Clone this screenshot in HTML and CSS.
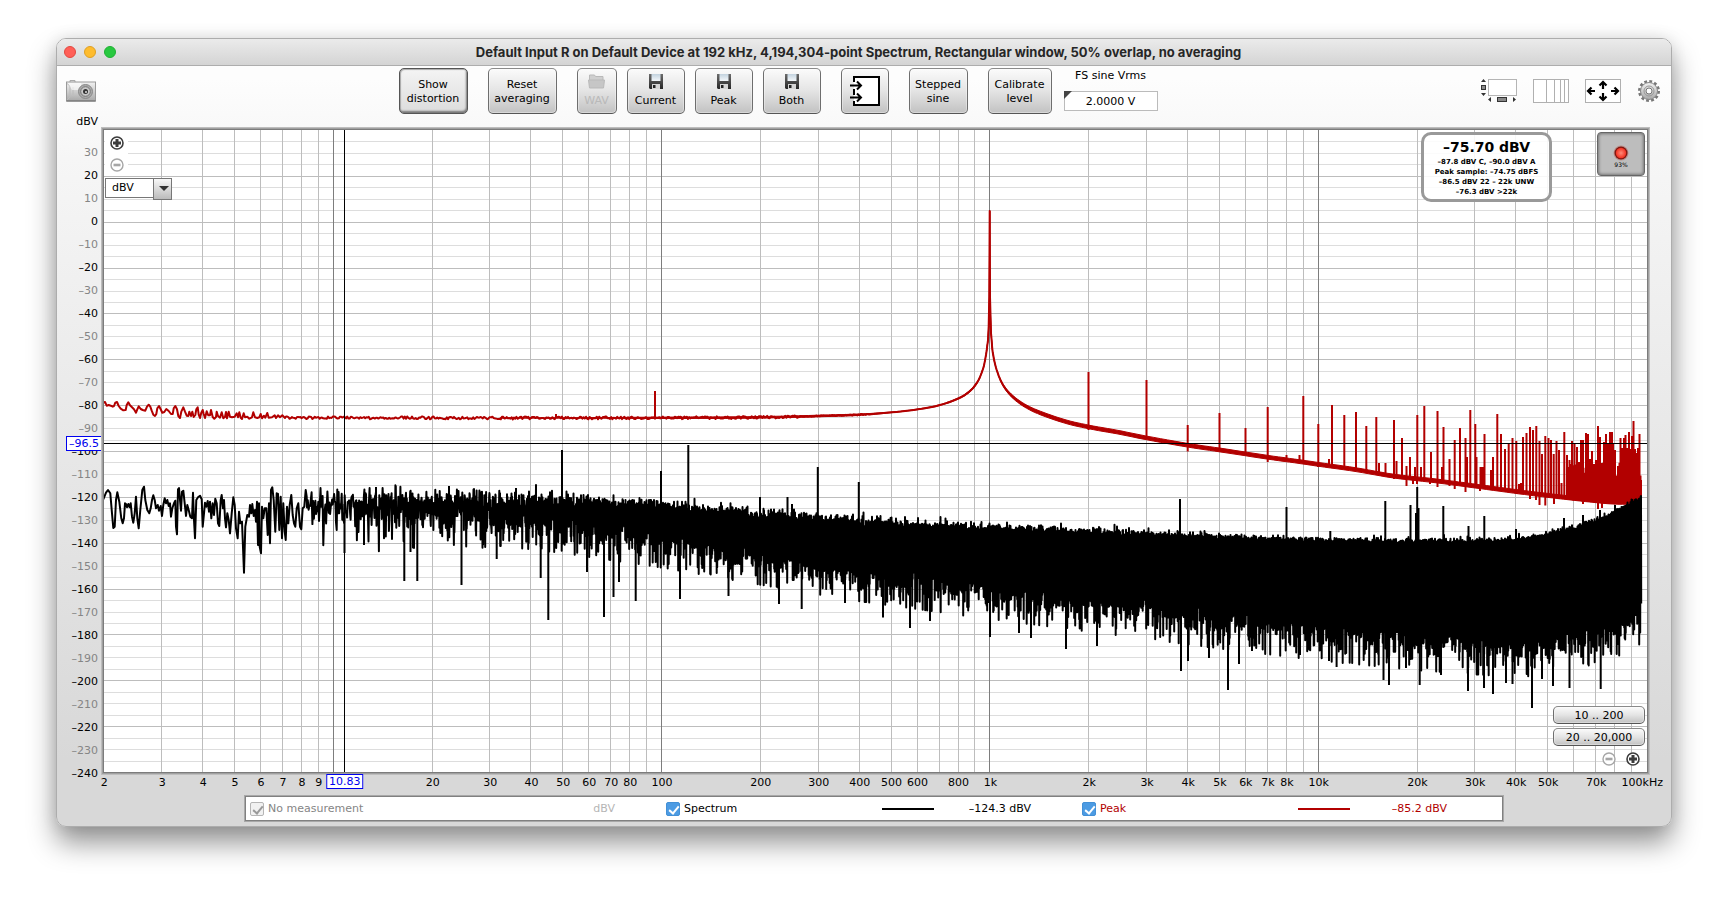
FILE: index.html
```html
<!DOCTYPE html>
<html lang="en">
<head>
<meta charset="utf-8">
<title>Spectrum</title>
<link rel="stylesheet" href="styles.css">
</head>
<body>
<svg class="defs" aria-hidden="true">
  <linearGradient id="metal" x1="0" y1="0" x2="0" y2="1"><stop offset="0" stop-color="#f2f2f2"/><stop offset="1" stop-color="#a8a8a8"/></linearGradient>
  <linearGradient id="paper" x1="0" y1="0" x2="0" y2="1"><stop offset="0" stop-color="#c3d3df"/><stop offset="1" stop-color="#f4f8fb"/></linearGradient>
  <linearGradient id="disk" x1="0" y1="0" x2="0" y2="1"><stop offset="0" stop-color="#6c6c6c"/><stop offset="1" stop-color="#262626"/></linearGradient>
  <radialGradient id="led"><stop offset="0" stop-color="#ff8a78"/><stop offset="1" stop-color="#f2301f"/></radialGradient>
  <symbol id="floppy" viewBox="0 0 14 15">
    <path d="M0 0h14v15h-13l-1-1z" fill="url(#disk)"/><path d="M2.5 0h9v7h-9z" fill="url(#paper)"/>
    <path d="M3 10h8v5h-8z" fill="#d5d5d5"/><path d="M4 11h2.5v3h-2.5z" fill="#222"/>
  </symbol>
  <symbol id="zoom-in" viewBox="0 0 14 14">
    <circle cx="7" cy="7" r="6" fill="#fff" stroke="#3c3c3c" stroke-width="1.6"/><path d="M7 3v8M3 7h8" stroke="#3c3c3c" stroke-width="3"/>
  </symbol>
  <symbol id="zoom-out" viewBox="0 0 14 14">
    <circle cx="7" cy="7" r="6" fill="#fff" stroke="#a6a6a6" stroke-width="1.4"/><path d="M3.5 7h7" stroke="#a6a6a6" stroke-width="2.6"/>
  </symbol>
</svg>

<main class="window">
  <header class="titlebar">
    <div class="lights"><i class="light red"></i><i class="light amber"></i><i class="light green"></i></div>
    <h1>Default Input R on Default Device at 192 kHz, 4,194,304-point Spectrum, Rectangular window, 50% overlap, no averaging</h1>
  </header>

  <div class="toolbar">
    <button class="plain" aria-label="Capture image">
      <svg width="30" height="22" viewBox="0 0 30 22">
        <path d="M4 2V.5h5V2" fill="#eee" stroke="#aaa"/>
        <rect x=".5" y="2" width="29" height="19" fill="url(#metal)" stroke="#9a9a9a"/>
        <path d="M1 3.5 4 6v11l-3 3M7 7v8" fill="none" stroke="#bbb"/><path d="M2 3h13v7H6z" fill="#fff" opacity=".6"/>
        <path d="M.5 21h29" stroke="#666"/>
        <circle cx="19.500" cy="11.500" r="7" fill="#aaa" stroke="#888"/><circle cx="19.500" cy="11.500" r="4.800" fill="#c9c9c9" stroke="#777"/>
        <circle cx="19.500" cy="11.500" r="2.500" fill="#333"/><circle cx="20" cy="12" r="1" fill="#ddd"/>
      </svg>
    </button>
    <div class="actions">
      <button class="btn w-wide toggled">Show<br>distortion</button>
      <button class="btn w-wide">Reset<br>averaging</button>
      <div class="group">
        <button class="btn w-small icon-top" disabled>
          <svg width="17" height="15" viewBox="0 0 17 15"><path d="M1.500 6V1h5l1 1.500h7.500V6" fill="#cfcfcf" stroke="#b9b9b9"/><path d="M.5 6h16l-1 8h-14z" fill="#c6c6c6" stroke="#b9b9b9"/></svg>
          WAV</button>
        <button class="btn w-mid icon-top"><svg width="14" height="15"><use href="#floppy"/></svg>Current</button>
        <button class="btn w-mid icon-top"><svg width="14" height="15"><use href="#floppy"/></svg>Peak</button>
        <button class="btn w-mid icon-top"><svg width="14" height="15"><use href="#floppy"/></svg>Both</button>
      </div>
      <button class="btn w-input" aria-label="Input">
        <svg width="30" height="30" viewBox="0 0 30 30">
          <path d="M4 1h25v28H4z" fill="#fff"/><path d="M4 6V1h25v28H4v-4M4 13v6" fill="none" stroke="#000" stroke-width="2"/>
          <path d="M0 9.500h10M7 5.500l4 4-4 4M0 21.500h10M7 17.500l4 4-4 4" fill="none" stroke="#000" stroke-width="2"/>
        </svg>
      </button>
      <button class="btn w-step">Stepped<br>sine</button>
      <button class="btn w-cal">Calibrate<br>level</button>
      <label class="field">FS sine Vrms<span class="field-box"><input type="text" value="2.0000 V"></span></label>
    </div>
    <div class="views">
      <button class="plain" aria-label="Scrollbars">
        <svg width="36" height="24" viewBox="0 0 36 24"><rect x="7.500" y=".5" width="28" height="16" fill="#fff" stroke="#b5b5b5"/>
          <path d="M0 3l2.500-3L5 3zM0 14l2.500 3L5 14zM10 18v5l-3-2.500zM32 18v5l3-2.500z" fill="#333"/>
          <rect x=".5" y="6.500" width="4" height="4" fill="#888" stroke="#333"/><rect x="16.500" y="18.500" width="9" height="4" fill="#888" stroke="#333"/></svg>
      </button>
      <button class="plain" aria-label="Frequency axis">
        <svg width="36" height="24" viewBox="0 0 36 24"><rect x=".5" y=".5" width="35" height="23" fill="#fff" stroke="#b0b0b0"/><path d="M13.500 1v22M21.500 1v22M27.500 1v22M31.500 1v22" stroke="#b0b0b0"/></svg>
      </button>
      <button class="plain" aria-label="Graph limits">
        <svg width="36" height="24" viewBox="0 0 36 24"><rect x=".5" y=".5" width="35" height="23" fill="#fff" stroke="#b0b0b0"/>
          <path d="M18 10V3M14.500 6.500 18 3l3.500 3.500M18 14v7M14.500 17.500 18 21l3.500-3.500M10 12H3M6.500 8.500 3 12l3.500 3.500M26 12h7M29.500 8.500 33 12l-3.500 3.500" fill="none" stroke="#000" stroke-width="2.200"/></svg>
      </button>
      <button class="plain" aria-label="Settings">
        <svg width="24" height="24" viewBox="0 0 24 24"><circle cx="12" cy="12" r="9.700" fill="none" stroke="#777" stroke-width="2.600" stroke-dasharray="2.800 2.280"/>
          <circle cx="12" cy="12" r="8.500" fill="url(#metal)" stroke="#858585"/><circle cx="12" cy="12" r="5" fill="none" stroke="#999"/><circle cx="12" cy="12" r="3" fill="#fff" stroke="#777"/></svg>
      </button>
    </div>
  </div>

  <div class="unit">dBV</div>

  <section class="chart">
    <div class="y-axis"><div class="y-labels" id="yLabels"></div><output class="readout y-read">–96.5</output></div>
    <div class="plot">
      <svg class="graph" id="graph" viewBox="104 130 1543 642" preserveAspectRatio="none" role="img" aria-label="Spectrum and peak level against frequency"></svg>
      <div class="zoom-y">
        <button class="plain" aria-label="Zoom in level"><svg width="14" height="14"><use href="#zoom-in"/></svg></button>
        <button class="plain" aria-label="Zoom out level"><svg width="14" height="14"><use href="#zoom-out"/></svg></button>
      </div>
      <span class="unit-select"><select aria-label="Level unit"><option>dBV</option></select></span>
      <div class="levels"><strong>–75.70 dBV</strong><span>–87.8 dBV C, –90.0 dBV A</span><span>Peak sample: –74.75 dBFS</span><span>–86.5 dBV 22 – 22k UNW</span><span>–76.3 dBV &gt;22k</span></div>
      <button class="record" aria-label="Record"><svg width="16" height="16" viewBox="0 0 16 16"><circle cx="8" cy="8" r="7.500" fill="#b98e8a"/><circle cx="8" cy="8" r="6.500" fill="#7c1710"/><circle cx="8" cy="8" r="5.200" fill="url(#led)"/></svg>93%</button>
      <div class="ranges">
        <button class="btn">10 .. 200</button>
        <button class="btn">20 .. 20,000</button>
        <div class="zoom-x">
          <button class="plain" aria-label="Zoom out frequency"><svg width="14" height="14"><use href="#zoom-out"/></svg></button>
          <button class="plain" aria-label="Zoom in frequency"><svg width="14" height="14"><use href="#zoom-in"/></svg></button>
        </div>
      </div>
    </div>
    <div class="x-axis" id="xLabels"><output class="readout x-read">10.83</output></div>
  </section>

  <footer class="legend">
    <div class="entry off"><label><input type="checkbox" checked disabled>No measurement</label><span class="value">dBV</span></div>
    <div class="entry"><label><input type="checkbox" checked>Spectrum</label><i class="swatch"></i><span class="value">–124.3 dBV</span></div>
    <div class="entry peak"><label><input type="checkbox" checked>Peak</label><i class="swatch"></i><span class="value">–85.2 dBV</span></div>
  </footer>
</main>
<script src="chart.js"></script>
</body>
</html>
```
FILE: styles.css
```css
* { box-sizing: border-box; }
body {
  margin: 0; padding: 38px 55px 73px 56px; height: 100vh; min-height: 600px; min-width: 1200px;
  background: #fff; color: #000; font: 11px/14px "DejaVu Sans", Verdana, sans-serif; overflow: hidden;
}
button, input, select { font: inherit; color: inherit; }
.defs { position: absolute; width: 0; height: 0; }
.window {
  height: 100%; display: flex; flex-direction: column; border: 1px solid #adadad; border-radius: 10px;
  background: linear-gradient(#fdfdfd 40px, #f6f6f6 120px, #d8d8d8 720px);
  box-shadow: 0 16px 28px rgba(0,0,0,.42), 0 0 16px rgba(0,0,0,.1);
}
.titlebar {
  flex: none; height: 27px; display: flex; align-items: center; padding: 0 70px 0 7px;
  background: linear-gradient(#ebebeb, #d4d4d4); border-bottom: 1px solid #adadad; border-radius: 9px 9px 0 0;
}
.titlebar h1 { flex: 1; margin: 0; text-align: center; font: bold 13px/16px Inter, sans-serif; color: #262626; white-space: nowrap; }
.lights { display: flex; gap: 8px; }
.light { width: 12px; height: 12px; border-radius: 50%; border: 1px solid; }
.red { background: #ff5f57; border-color: #e2483f; }
.amber { background: #febc2e; border-color: #dfa023; }
.green { background: #28c840; border-color: #1fb033; }

.toolbar { flex: none; display: flex; justify-content: space-between; padding: 2px 10px 0 9px; height: 48px; }
.plain { display: flex; padding: 0; border: 0; background: none; align-self: center; }
.toolbar > .plain { margin-top: -1px; }
.actions { display: flex; gap: 20px; margin-right: 21px; }
.group { display: flex; gap: 10px; }
.btn {
  padding: 2px 0 0; border: 1px solid #6e6e6e; border-top-color: #8a8a8a; border-bottom-color: #555; border-radius: 5px;
  background: linear-gradient(#fbfbfb, #e4e4e4 50%, #c2c2c2); box-shadow: inset 0 0 0 1px rgba(255,255,255,.35);
  height: 46px; text-align: center;
}
.toggled { background: linear-gradient(#f4f4f4, #dcdcdc); border-color: #555; box-shadow: inset -1px -2px 2px #777, inset 1px 1px 1px #aaa; }
.btn:disabled { color: #b9b9b9; }
.w-wide { width: 69px; } .w-small { width: 40px; } .w-mid { width: 58px; } .w-input { width: 48px; } .w-step { width: 59px; } .w-cal { width: 64px; }
.w-input { padding: 0; }
.w-input svg { display: block; margin: 0 auto; }
.icon-top { padding: 0; display: flex; flex-direction: column; align-items: center; justify-content: center; gap: 5px; }
.field { display: flex; flex-direction: column; gap: 8px; padding-top: 1px; align-items: center; margin-left: -8px; }
.field-box { position: relative; display: block; }
.field-box::before { content: ""; position: absolute; left: 0; top: 0; border: 4px solid; border-color: #444 transparent transparent #444; }
.field input { display: block; width: 94px; height: 20px; padding: 0; border: 1px solid #bbb; background: #fff; text-align: center; }
.views { display: flex; gap: 16px; align-items: center; }

.unit { flex: none; height: 16px; width: 41px; padding-top: 1px; text-align: right; }
.chart { flex: 1; min-height: 0; display: grid; grid-template: 1fr 25px / 47px 1fr 24px; }
.y-axis { position: relative; min-height: 0; }
.y-labels { position: absolute; inset: 12px 6px -13px 0; display: grid; grid-auto-rows: 1fr; justify-items: end; align-items: center; line-height: 12px; }
.minor { color: #858585; }
.readout { position: absolute; height: 15px; padding: 0 2px; border: 1px solid #00e; background: #fff; color: #00e; line-height: 13px; }
.y-read { right: 2px; top: 47.600%; }
.x-read { left: 15.600%; top: 2px; transform: translateX(-50%); }
.plot { position: relative; min-width: 0; min-height: 0; background: #fff; box-shadow: 0 0 0 1px #7c7c7c, 0 0 0 2px #a0a0a0, 0 0 0 3px #bdbdbd; }
.graph { position: absolute; width: 100%; height: 100%; display: block; }
.graph path { fill: none; }
.graph .g-minor { stroke: #ddd; }
.graph .g-major { stroke: #bdbdbd; }
.graph .g-decade { stroke: #7d7d7d; }
.graph .cursor { stroke: #000; }
.graph .t-peak { stroke: #b20000; stroke-width: 2; stroke-linejoin: round; }
.graph .t-skirt { stroke: #b20000; stroke-width: 1; fill: #b20000; }
.graph .t-spec { stroke: #000; stroke-width: 2; stroke-linejoin: round; }
.zoom-y { position: absolute; left: 1px; top: 6px; display: flex; flex-direction: column; gap: 8px; padding: 0 4px 0 5px; background: #fff; }
.unit-select { position: absolute; left: 1px; top: 48px; width: 67px; height: 20px; background: #fff; }
.unit-select select { appearance: none; width: 100%; height: 100%; padding: 0 20px 0 6px; border: 1px solid #777; border-radius: 0; background: none; }
.unit-select::before { content: ""; position: absolute; right: 0; top: 0; width: 17px; height: 20px; border: 1px solid #777; background: linear-gradient(#f8f8f8, #bbb); }
.unit-select::after { content: ""; position: absolute; right: 3px; top: 8px; border: 5px solid transparent; border-top-color: #333; border-bottom: 0; pointer-events: none; }
.levels {
  position: absolute; right: 95px; top: 2px; width: 131px; height: 70px; padding-top: 2px; display: flex; flex-direction: column; align-items: center;
  border: 3px solid #999; border-radius: 10px; background: rgba(255,255,255,.88); font: bold 7px/10px "DejaVu Sans", sans-serif; white-space: nowrap;
}
.levels strong { font: bold 14px/20px "DejaVu Sans", sans-serif; }
.record {
  position: absolute; right: 2px; top: 2px; width: 48px; height: 44px; padding: 12px 0 0; display: flex; flex-direction: column; align-items: center;
  border: 1px solid #666; border-radius: 4px; background: #bdbdbd; box-shadow: inset 0 0 3px 1px #777; font-size: 6px; line-height: 8px;
}
.ranges { position: absolute; right: 2px; bottom: 6px; width: 92px; display: flex; flex-direction: column; gap: 4px; }
.ranges .btn { height: 18px; padding: 1px 0 0; line-height: 14px; }
.zoom-x { display: flex; justify-content: flex-end; gap: 10px; padding: 2px 5px 0 0; }
.x-axis { grid-column: 2; position: relative; }
.tick { position: absolute; top: 4px; transform: translateX(-50%); white-space: nowrap; }
.tick.last { transform: none; right: -16px; }

.legend { flex: none; height: 23px; margin: 0 169px 6px 189px; padding: 0 4px; display: grid; grid-template-columns: repeat(3, 1fr); background: #fff; box-shadow: 0 0 0 1px #808080, 0 0 0 2px #a8a8a8; }
.entry { display: flex; align-items: center; padding: 1px 51px 0 0; }
.entry label { flex: 1; display: flex; align-items: center; gap: 4px; }
.entry input { appearance: none; position: relative; width: 14px; height: 14px; margin: 0; border-radius: 2px; background: #4c9be3; border: 1px solid #4390d6; }
.entry input::after { content: ""; position: absolute; left: 4px; top: 1px; width: 4px; height: 8px; border: solid #fff; border-width: 0 2px 2px 0; transform: rotate(40deg); }
.entry.off { color: #858585; }
.off input { background: #f1f1f1; border-color: #b5b5b5; }
.off input::after { border-color: #999; }
.off .value { color: #b5b5b5; }
.swatch { width: 52px; height: 2px; margin-right: 33px; background: #000; }
.value { width: 64px; text-align: right; white-space: nowrap; }
.peak { color: #b20000; }
.peak .swatch { background: #b20000; }
```
FILE: chart.js
```js
// Graph space: x 104..1647 covers 2 Hz..100 kHz, y 130..772 covers +40..-240 dBV.
const DECADE = 328.3, X10 = 333.3;
const fx = f => X10 + DECADE * Math.log10(f / 10);
const xf = x => 10 * Math.pow(10, (x - X10) / DECADE);
const vy = v => 130 + (40 - v) * 642 / 280;

let state = 20240;
const rnd = () => { state = (state * 1664525 + 1013904223) >>> 0; return (state + 1) / 4294967298; };
const lerp = (t, x) => {
  let i = 1;
  while (i < t.length - 1 && t[i][0] < x) i++;
  const [a, b] = [t[i - 1], t[i]];
  return a[1] + (b[1] - a[1]) * Math.min(1, Math.max(0, (x - a[0]) / (b[0] - a[0])));
};
// Catmull-Rom resampling of a polyline
const smooth = p => {
  const out = [];
  for (let i = 0; i < p.length - 1; i++) {
    const a = p[Math.max(0, i - 1)], b = p[i], c = p[i + 1], d = p[Math.min(p.length - 1, i + 2)];
    const sb = i ? (c[1] - a[1]) / (c[0] - a[0]) : (c[1] - b[1]) / (c[0] - b[0]);
    const sc = i < p.length - 2 ? (d[1] - b[1]) / (d[0] - b[0]) : (c[1] - b[1]) / (c[0] - b[0]);
    const h = c[0] - b[0];
    for (let k = 0; k < 6; k++) {
      const t = k / 6, u = 1 - t;
      out.push([b[0] + h * t, (1 + 2 * t) * u * u * b[1] + t * u * u * h * sb + t * t * (3 - 2 * t) * c[1] - t * t * u * h * sc]);
    }
  }
  out.push(p[p.length - 1]);
  return out;
};
const toPath = p => 'M' + p.map(q => q[0].toFixed(1) + ' ' + q[1].toFixed(1)).join('L');
const graph = document.getElementById('graph');
const add = (cls, d) => {
  const p = document.createElementNS('http://www.w3.org/2000/svg', 'path');
  p.setAttribute('class', cls); p.setAttribute('d', d); graph.appendChild(p);
};
const pairs = s => s.trim().split(/\s+/).map(p => p.split(',').map(Number));
const traced = s => pairs(s).map(([x, y]) => [40 + x / 3, 380 + y / 3]);

// grid
let minor = '', major = '', decade = '';
for (let v = 35; v > -240; v -= 5) {
  const d = `M104 ${Math.round(vy(v)) + .5}H1647`;
  if (v % 20) minor += d; else major += d;
}
for (let m = 1; m < 1e5; m *= 10) for (let k = 1; k < 10; k++) {
  const f = m * k;
  if (f <= 2) continue;
  const d = `M${Math.floor(fx(f)) + .5} 130V772`;
  if (k === 1) decade += d; else major += d;
}
add('g-minor', minor); add('g-major', major); add('g-decade', decade);

// peak trace
const left = pairs(`285,417.7 500,418 700,417.700 760,417.300 818,416 859,414.700 892,412.300 918,409.300 939,405.300 958.700,398.300 970,391 978,381
 983.300,368 986,355 988,340`);
const right = pairs(`991,333 992.700,352 996.700,370 1003,385 1013,397 1026.700,406.700
 1043,414 1067,422 1089,427 1117,432 1147,438 1188,445.300 1220,450 1268,457.300 1300,461.700 1318,464.300 1356,469.700 1393,476 1437,481
 1480,486.700 1520,492 1547,495.300 1580,499 1613,502 1641.500,502`);
const skirt = [...smooth(left), [988.7, 326], [989.3, 297], [989.7, 211], [990, 297], ...smooth(right)];
const peak = traced(`190,68 195,66 200,77 206,75 212,77 218,80 222,78 226,68 231,66 236,78 242,86 250,91 257,90 260,75 265,67 270,76 276,82
 282,88 288,98 292,88 296,79 302,87 308,90 316,92 321,80 326,74 331,80 335,92 340,104 345,108 349,102 352,85 357,78 362,88 367,98 373,96
 379,87 386,93 393,102 398,102 401,85 406,78 411,88 415,108 420,114 424,95 430,82 435,95 440,107 445,108 448,95 453,108 457,95 461,111
 466,105 469,88 473,82 476,104 480,114 484,98 488,90 491,102 495,114 500,94 505,106 510,106 513,90 518,111 523,116 528,111 530,95 534,108
 540,113 545,97 550,115 555,111 558,96 561,115 566,95 570,110 576,112 584,110 590,100 594,112 598,97 602,113 606,117 611,100 615,112
 622,110 628,116 636,112 640,97 645,112 652,114 658,112 662,102 666,115 672,107 676,113 682,99 686,113 696,112 704,106 708,114 714,106
 720,112 727,106 735,114`);
for (let x = 286; x < 870; x += 1.2) peak.push([x, lerp(skirt, x) + (rnd() - .5) * (x < 800 ? 2.8 : 1.2)]);
peak.push(...skirt.filter(p => p[0] > 870));
add('t-peak', toPath(peak));

const half = [[560, 0], [650, .7], [850, .8], [905, .2], [940, .4], [975, .9], [988, .2], [993, .3], [1010, 1.4], [1040, 1.8], [1641, 2]];
const body = skirt.filter(p => p[0] >= 500);
add('t-skirt', toPath([...body.map(p => [p[0], p[1] - lerp(half, p[0])]), ...body.slice().reverse().map(p => [p[0], p[1] + lerp(half, p[0])])]) + 'Z');

const peakUp = pairs(`556,414 655,391 1088.500,372 1146.500,380 1187.700,425 1219.500,413 1245.500,428 1267.700,407 1286.500,455 1299.500,455 1303.300,396
 1318.300,424 1329,459 1332,405 1344.300,415 1356,412 1366.300,426 1376.300,417 1379,463 1385.500,463 1394,420 1396.500,461 1402,438 1406.500,466
 1410,457 1415,467 1417.300,415 1421,467 1424.300,406 1431,452 1437.500,411 1442,467 1443.500,427 1449.500,459 1454.700,440 1460,428 1465.500,438
 1467,457 1470.300,410 1475.300,424 1476.500,457 1480.500,467 1482.500,467 1484.500,434 1491,470 1493,457 1497.300,414 1501,434 1505,449 1508.700,444
 1512.500,438 1516.300,441 1519,484 1521,483 1523,437 1526.500,433 1530,427 1533,430 1536.300,426 1539.500,441 1542,454 1545.300,436 1548.500,438
 1551,440 1553.700,454 1556.500,441 1559,450 1561.500,483 1564.300,432 1567,455 1569.500,460 1572,441 1574.500,444 1577,447 1579,462 1581,440 1583,440
 1586,433 1588,434 1590,459 1592,451 1594,464 1596,460 1598,426 1600,437 1602,463 1604,442 1606,434 1608,443 1610,432 1612,432 1613,443
 1615,450 1617,492 1619,467 1620.500,438 1622,448 1624,438 1625.500,435 1627,448 1629,432 1630.500,449 1632,436 1633.500,421 1635,449
 1636.500,453 1638,448 1639.500,434 1641,480`);
add('t-peak', peakUp.map(([x, y]) => `M${x} ${lerp(skirt, x)}V${y}`).join(''));
let fill = '';
for (let x = 1567; x < 1641; x += 1.5) fill += `M${x} ${lerp(skirt, x) + 2}V${460 + rnd() * 18}`;
const peakDown = pairs(`655,419.500 1088.500,430 1187.700,451.500 1267.700,462 1318,467 1376,474 1394,479 1406.500,486 1413,484 1417,484 1430,484 1437.500,487
 1449.500,486 1454.700,489 1465.500,492 1480,491 1517,494 1530,499 1536,500 1539.500,505 1545.300,505.500 1554,504 1559,499 1583,504 1598,509 1602,508`);
add('t-peak', fill + peakDown.map(([x, y]) => `M${x} ${lerp(skirt, x)}V${y}`).join(''));

// spectrum trace: exponential power noise on the level curve, one FFT bin each 0.0458 Hz
const level = [[300, -123], [500, -123.5], [562, -125], [661, -128.5], [760, -133], [859, -137], [990, -140.5], [1089, -142.700], [1220, -145.700],
  [1318, -147.600], [1417, -148.600], [1500, -148.300], [1530, -147.400], [1573, -143.300], [1600, -139.500], [1615, -136.500], [1632, -132], [1641, -130.500]];
const spec = traced(`190,358 198,338 204,330 211,340 216,400 220,444 224,440 228,360 232,337 238,365 244,415 248,430 252,415 255,370 258,372 261,382
 265,372 269,382 272,370 276,410 280,428 284,400 288,350 292,415 296,445 301,390 304,360 307,330 312,320 316,360 322,390 328,400 332,385
 336,360 340,346 344,360 348,385 353,375 357,392 362,378 366,408 370,375 374,355 378,370 382,360 386,378 390,370 393,410 397,385 402,370
 406,362 408,440 411,463 414,328 417,324 420,360 423,392 426,335 430,332 434,370 438,408 442,375 446,390 451,410 456,415 459,338 462,420
 465,475 469,360 474,352 480,347 485,358 488,440 492,400 495,368 499,380 503,363 507,395 510,365 514,415 518,370 522,405 526,356 530,370
 534,430 538,438 542,360 545,345 549,385 552,360 555,415 558,442 562,400 566,420 570,460 575,400 580,352 584,375 588,445 593,475 597,395
 601,430 606,425 612,578 616,440 622,405 627,410 630,375 634,400 637,372 641,408 645,390 648,425 651,365 654,495 657,370 659,500 663,520
 666,380 670,415 674,385 679,385 683,465 687,370 690,490 693,330 697,322 701,360 706,455 710,340 714,342 718,450 722,350 726,475 730,370
 734,455 737,480 741,380 745,430 749,375 754,345 758,405 762,430 766,440 770,385 775,370 780,440 784,448 788,385 793,380 797,330 800,350`);
for (let f = xf(307); fx(f) < 500; f += .0458) {
  const x = fx(f);
  spec.push([x, vy(Math.max(-138 - 6 * rnd(), lerp(level, x) + 10 * Math.log10(-Math.log(rnd())) + .5))]);
}
for (let x = 500; x < 1641.5; x += .5) {
  const n = xf(x) * .00351 / .0458, base = lerp(level, x);
  const hi = base + 10 * Math.log10(-Math.log(1 - Math.pow(rnd(), 1 / n)));
  const lo = base + 10 * Math.log10(-Math.log(rnd()) / n);
  spec.push([x, vy(Math.max(base - 6, hi))], [x + .2, vy(Math.max(base - 12 - 11 * Math.log10(n + 1), lo))]);
}
add('t-spec', toPath(spec));
const spikes = pairs(`562,450 661,471 688.300,445 760,497 787.500,497 792,504 817.800,467 858.800,482 1180,499 1286.500,507 1385.300,501 1410.500,505
 1417.200,487 1416,513 1418.500,508 1443.300,506 1468.500,526 1484.300,516 1516,529 1564,518 1583,515 1600,510 1330.300,531 1615,505
 548.300,620 604,617 613.500,597 635.700,601 619,582 540.700,578 587,572 680,599 728.500,596 779,604 801.700,609 845,603 883,617.500 910,628
 930,621 990,637 1019,633 1031,638 1066,649 1097,646 1181,671 1188,661 1209,658 1228,690 1239,664 1252,651 1300,655 1329,661 1336.600,667
 1383.500,680 1389,685 1406,668 1419.700,685 1468,691 1441,675 1484,688 1493,694 1506,683 1512.500,684 1532,708 1542,679 1553,686 1569.500,688
 1600.700,689 404.300,581 417.300,581 461.500,585 496.700,559 344.500,553 364,545 410.500,552 376,487 449,486 516,488`);
add('t-spec', spikes.map(([x, y]) => `M${x} ${vy(lerp(level, x))}V${y}`).join(''));
add('cursor', 'M344.500 130V772M104 443.500H1647');

// axis labels
const yBox = document.getElementById('yLabels');
for (let v = 30; v >= -240; v -= 10) {
  const s = document.createElement('span');
  s.textContent = (v < 0 ? '–' : '') + Math.abs(v);
  if (v % 20) s.className = 'minor';
  yBox.appendChild(s);
}
const xBox = document.getElementById('xLabels');
const ticks = [2, 3, 4, 5, 6, 7, 8, 9, 20, 30, 40, 50, 60, 70, 80, 100, 200, 300, 400, 500, 600, 800, 1e3, 2e3, 3e3, 4e3, 5e3, 6e3, 7e3, 8e3, 1e4, 2e4, 3e4, 4e4, 5e4, 7e4, 1e5];
for (const f of ticks) {
  const s = document.createElement('span');
  s.textContent = f === 1e5 ? '100kHz' : f < 1000 ? f : f / 1000 + 'k';
  s.className = f === 1e5 ? 'tick last' : 'tick';
  if (f < 1e5) s.style.left = ((fx(f) - 103.5) / 15.43).toFixed(2) + '%';
  xBox.appendChild(s);
}
```
